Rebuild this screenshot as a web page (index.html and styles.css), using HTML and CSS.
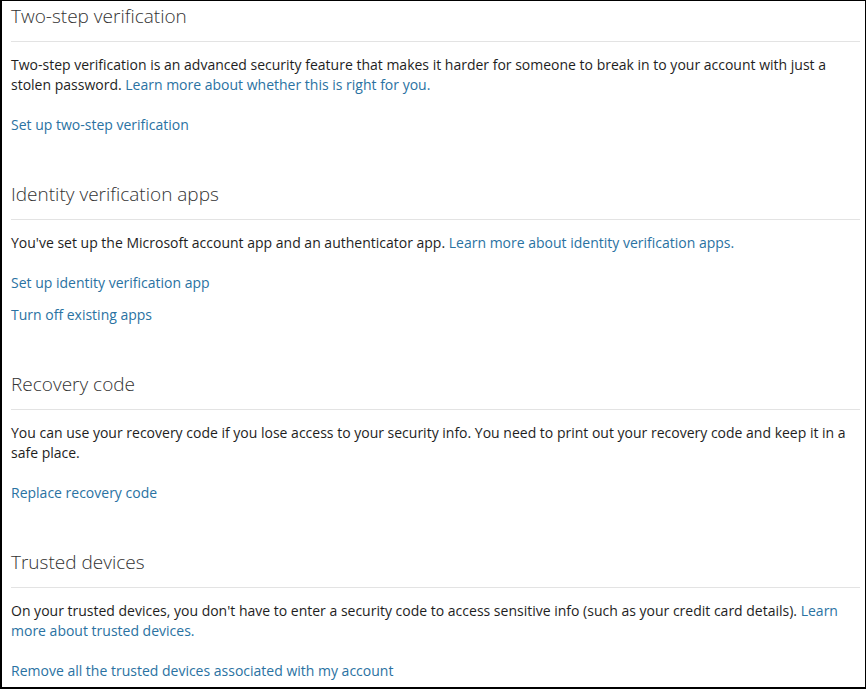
FILE: index.html
```html
<!DOCTYPE html>
<html lang="en">
<head>
<meta charset="utf-8">
<title>Security settings</title>
<link rel="stylesheet" href="styles.css">
</head>
<body>
<div class="frame">
  <section class="sec">
    <h2 class="sec-title">Two-step verification</h2>
    <p class="sec-text">Two-step verification is an advanced security feature that makes it harder for someone to break in to your account with just a stolen password. <a href="#" class="lnk">Learn more about whether this is right for you.</a></p>
    <div class="actions">
      <a href="#" class="lnk">Set up two-step verification</a>
    </div>
  </section>
  <section class="sec">
    <h2 class="sec-title">Identity verification apps</h2>
    <p class="sec-text">You've set up the Microsoft account app and an authenticator app. <a href="#" class="lnk">Learn more about identity verification apps.</a></p>
    <div class="actions">
      <a href="#" class="lnk">Set up identity verification app</a>
      <a href="#" class="lnk">Turn off existing apps</a>
    </div>
  </section>
  <section class="sec">
    <h2 class="sec-title">Recovery code</h2>
    <p class="sec-text">You can use your recovery code if you lose access to your security info. You need to print out your recovery code and keep it in a safe place.</p>
    <div class="actions">
      <a href="#" class="lnk">Replace recovery code</a>
    </div>
  </section>
  <section class="sec">
    <h2 class="sec-title">Trusted devices</h2>
    <p class="sec-text">On your trusted devices, you don't have to enter a security code to access sensitive info (such as your credit card details). <a href="#" class="lnk">Learn more about trusted devices.</a></p>
    <div class="actions">
      <a href="#" class="lnk">Remove all the trusted devices associated with my account</a>
    </div>
  </section>
</div>
</body>
</html>
```

FILE: styles.css
```css
html, body {
  margin: 0;
  padding: 0;
  background: #ffffff;
}
.frame {
  box-sizing: border-box;
  width: 866px;
  height: 689px;
  border-style: solid;
  border-color: #000000;
  border-width: 1px 1px 2px 2px;
  padding: 1px 5px 0 9px;
  overflow: hidden;
  font-family: "Open Sans", "Noto Sans", sans-serif;
  font-size: 14px;
  color: #1e1e1e;
  display: flex;
  flex-direction: column;
  gap: 45px;
}
.sec {
  display: flex;
  flex-direction: column;
}
.sec-title {
  margin: 0;
  font-size: 19px;
  font-weight: 300;
  line-height: 28px;
  color: #333333;
  padding-bottom: 11px;
  border-bottom: 1px solid #e3e3e3;
}
.sec-text {
  margin: 13px 0 0;
  line-height: 20px;
}
.actions {
  margin-top: 20px;
  display: flex;
  flex-direction: column;
  gap: 12px;
}
.lnk {
  color: #2a72a2;
  text-decoration: none;
  line-height: 20px;
}
```
